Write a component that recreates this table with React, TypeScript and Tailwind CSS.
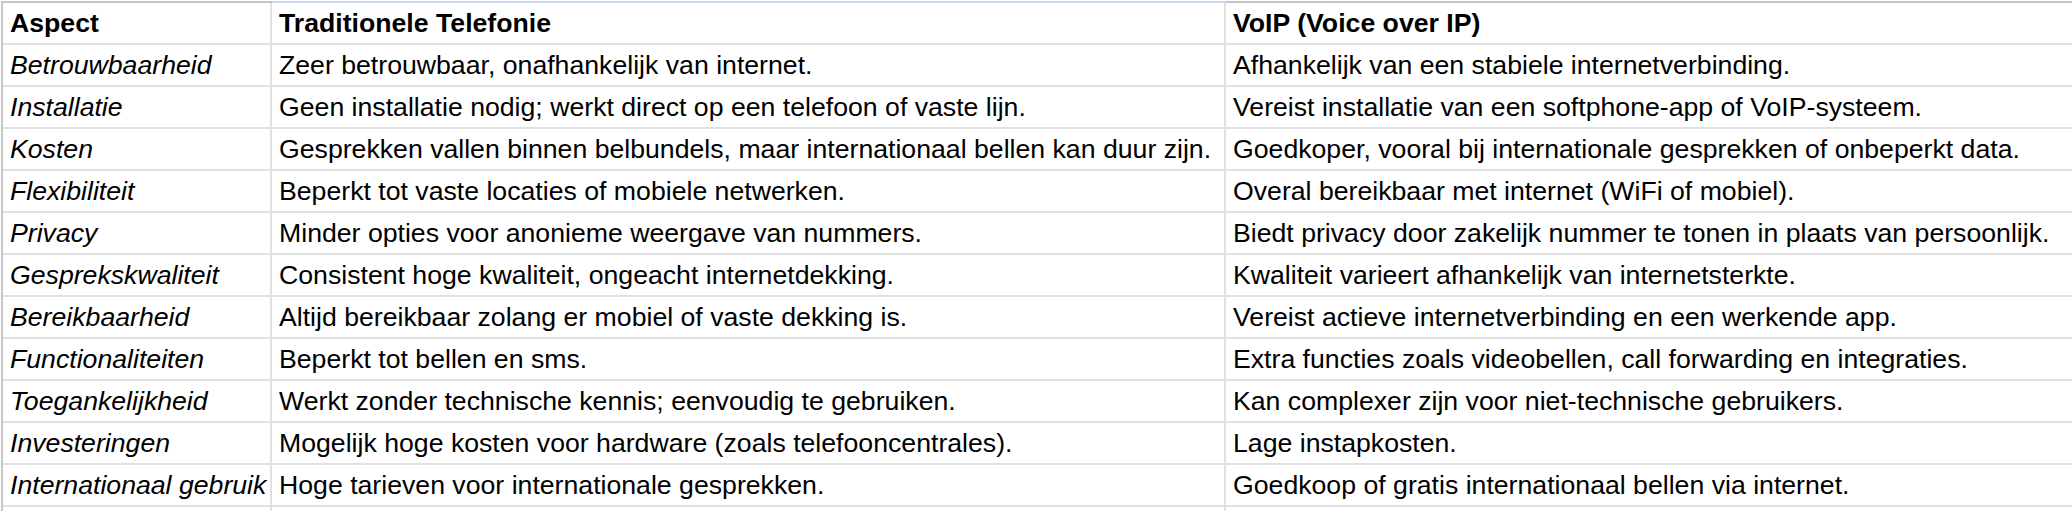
import React from "react";

const rows: [string, string, string][] = [
  ["Betrouwbaarheid", "Zeer betrouwbaar, onafhankelijk van internet.", "Afhankelijk van een stabiele internetverbinding."],
  ["Installatie", "Geen installatie nodig; werkt direct op een telefoon of vaste lijn.", "Vereist installatie van een softphone-app of VoIP-systeem."],
  ["Kosten", "Gesprekken vallen binnen belbundels, maar internationaal bellen kan duur zijn.", "Goedkoper, vooral bij internationale gesprekken of onbeperkt data."],
  ["Flexibiliteit", "Beperkt tot vaste locaties of mobiele netwerken.", "Overal bereikbaar met internet (WiFi of mobiel)."],
  ["Privacy", "Minder opties voor anonieme weergave van nummers.", "Biedt privacy door zakelijk nummer te tonen in plaats van persoonlijk."],
  ["Gesprekskwaliteit", "Consistent hoge kwaliteit, ongeacht internetdekking.", "Kwaliteit varieert afhankelijk van internetsterkte."],
  ["Bereikbaarheid", "Altijd bereikbaar zolang er mobiel of vaste dekking is.", "Vereist actieve internetverbinding en een werkende app."],
  ["Functionaliteiten", "Beperkt tot bellen en sms.", "Extra functies zoals videobellen, call forwarding en integraties."],
  ["Toegankelijkheid", "Werkt zonder technische kennis; eenvoudig te gebruiken.", "Kan complexer zijn voor niet-technische gebruikers."],
  ["Investeringen", "Mogelijk hoge kosten voor hardware (zoals telefooncentrales).", "Lage instapkosten."],
  ["Internationaal gebruik", "Hoge tarieven voor internationale gesprekken.", "Goedkoop of gratis internationaal bellen via internet."],
];

function Cell({ children, className = "", last = false }: { children?: React.ReactNode; className?: string; last?: boolean }) {
  return (
    <div
      className={
        "flex items-end h-[42px] border-b-2 border-[#e1e1e1] px-[7px] pb-[5px] overflow-hidden whitespace-nowrap " +
        (last ? "" : "border-r-2 ") +
        className
      }
    >
      <span className="leading-[30px]">{children}</span>
    </div>
  );
}

export default function App() {
  return (
    <div className="w-[2072px] h-[511px] overflow-hidden bg-white pt-px pl-px text-black text-[26.67px]" style={{ fontFamily: '"Liberation Sans", Arial, sans-serif' }}>
      <div className="flex h-[2px]">
        <div className="w-[271px] bg-[#c4c4c4]" />
        <div className="w-[954px] bg-[#c8d5ee]" />
        <div className="flex-1 bg-[#c4c4c4]" />
      </div>
      <div className="border-l-2 border-[#c8c8c8] grid grid-cols-[269px_954px_1fr]">
        <Cell className="font-bold">Aspect</Cell>
        <Cell className="font-bold">Traditionele Telefonie</Cell>
        <Cell className="font-bold" last>VoIP (Voice over IP)</Cell>
        {rows.map((r, i) => (
          <React.Fragment key={i}>
            <Cell className="italic">{r[0]}</Cell>
            <Cell>{r[1]}</Cell>
            <Cell last>{r[2]}</Cell>
          </React.Fragment>
        ))}
        <Cell />
        <Cell />
        <Cell last />
      </div>
    </div>
  );
}
